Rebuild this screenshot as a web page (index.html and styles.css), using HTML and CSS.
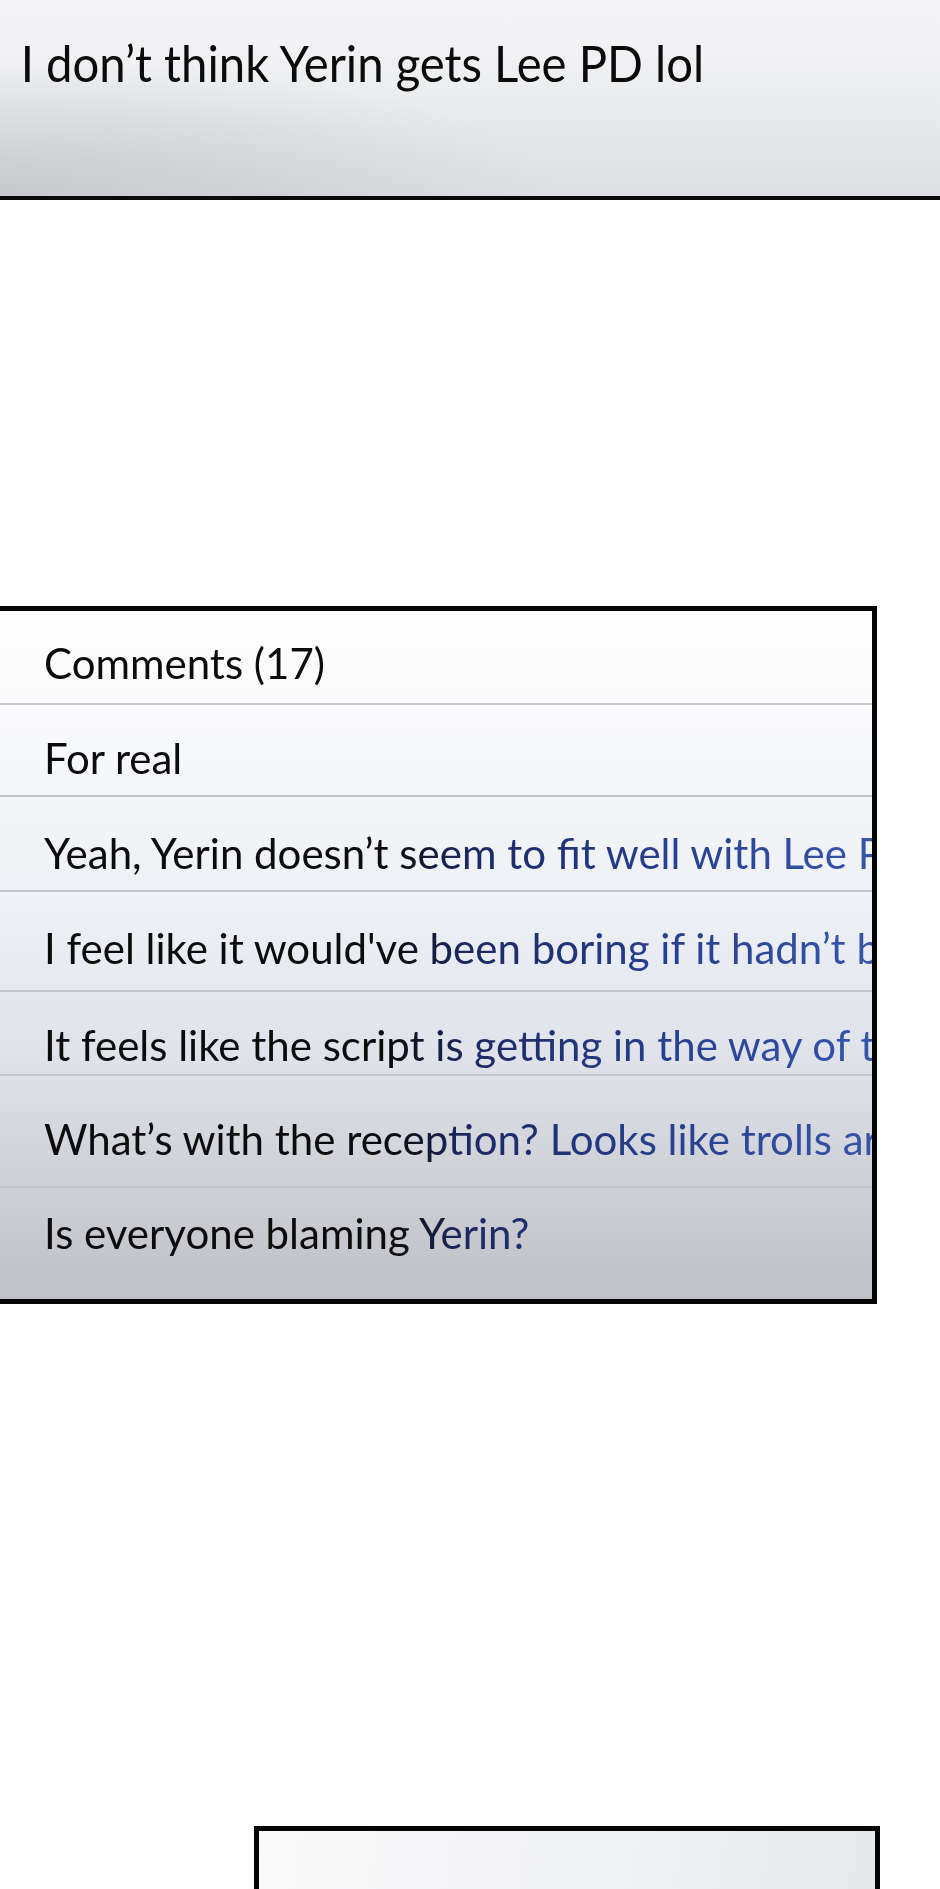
FILE: index.html
```html
<!DOCTYPE html>
<html lang="en">
<head>
  <meta charset="UTF-8" />
  <meta name="viewport" content="width=device-width, initial-scale=1.0"/>
  <title>Comments</title>
  <link rel="stylesheet" href="styles.css">
</head>
<body>

<div class="caption">
  <p class="caption-text">I don’t think Yerin gets Lee PD lol</p>
</div>

<div class="panel comments">
  <div class="row"><span class="line">Comments (17)</span></div>
  <div class="row"><span class="line">For real</span></div>
  <div class="row"><span class="line">Yeah, Yerin doesn’t seem to fit well with Lee PD</span></div>
  <div class="row"><span class="line">I feel like it would've been boring if it hadn’t been for her</span></div>
  <div class="row"><span class="line">It feels like the script is getting in the way of the story</span></div>
  <div class="row"><span class="line">What’s with the reception? Looks like trolls are out</span></div>
  <div class="row"><span class="line">Is everyone blaming Yerin?</span></div>
</div>

<div class="panel next"></div>

</body>
</html>
```

FILE: styles.css
```css
html, body {
  margin: 0;
  padding: 0;
  background: #fff;
}
body {
  width: 940px;
  height: 1889px;
  overflow: hidden;
  font-family: Lato, "Open Sans", sans-serif;
}

/* top caption bar */
.caption {
  height: 196px;
  border-bottom: 4px solid #0a0a0a;
  background:
    radial-gradient(ellipse 60% 70% at 0% 100%, rgba(180,181,186,0.55), rgba(180,181,186,0) 100%),
    linear-gradient(to bottom, #f6f6f8 0%, #eeeff1 40%, #dedfe2 100%);
}
.caption-text {
  display: inline-block;
  margin: 0;
  padding: 33px 0 0 22px;
  font-size: 50px;
  color: #0b0b0b;
  transform: scaleX(0.945);
  transform-origin: 0 0;
}

/* comment panel */
.panel {
  border: 5px solid #050505;
  box-sizing: border-box;
}
.comments {
  margin: 406px 0 0 -10px;
  width: 887px;
  height: 698px;
  overflow: hidden;
  background: linear-gradient(to bottom, #fefefe 0%, #f7f8fa 20%, #eceff4 45%, #dfe2e9 65%, #cfd1d7 82%, #bfc1c6 100%);
}
.row {
  display: flex;
  align-items: center;
  padding-left: 49px;
  border-bottom: 2px solid #c4c5c9;
  white-space: nowrap;
  box-sizing: border-box;
}
.row:last-child { border-bottom: none; }
.row:nth-child(1) { height: 94px; padding-top: 11px; }
.row:nth-child(2) { height: 92px; padding-top: 16px; }
.row:nth-child(3) { height: 95px; padding-top: 18px; }
.row:nth-child(4) { height: 100px; padding-top: 14px; }
.row:nth-child(5) { height: 84px; padding-top: 24px; }
.row:nth-child(6) { height: 112px; padding-top: 16px; }
.row:nth-child(7) { height: 104px; padding-bottom: 14px; }

/* text fades from black into blue towards the right */
.line {
  font-size: 42px;
  color: transparent;
  background: linear-gradient(90deg, #0c0c0e 0, #0c0c0e 350px, #1c2862 420px, #263f8e 620px, #3554aa 820px) no-repeat;
  background-size: 900px 100%;
  -webkit-background-clip: text;
  background-clip: text;
}

.next {
  margin: 522px 0 0 254px;
  width: 626px;
  height: 200px;
  background: linear-gradient(100deg, #fafafb 0%, #f2f3f5 50%, #e6e7ea 100%);
}
```
